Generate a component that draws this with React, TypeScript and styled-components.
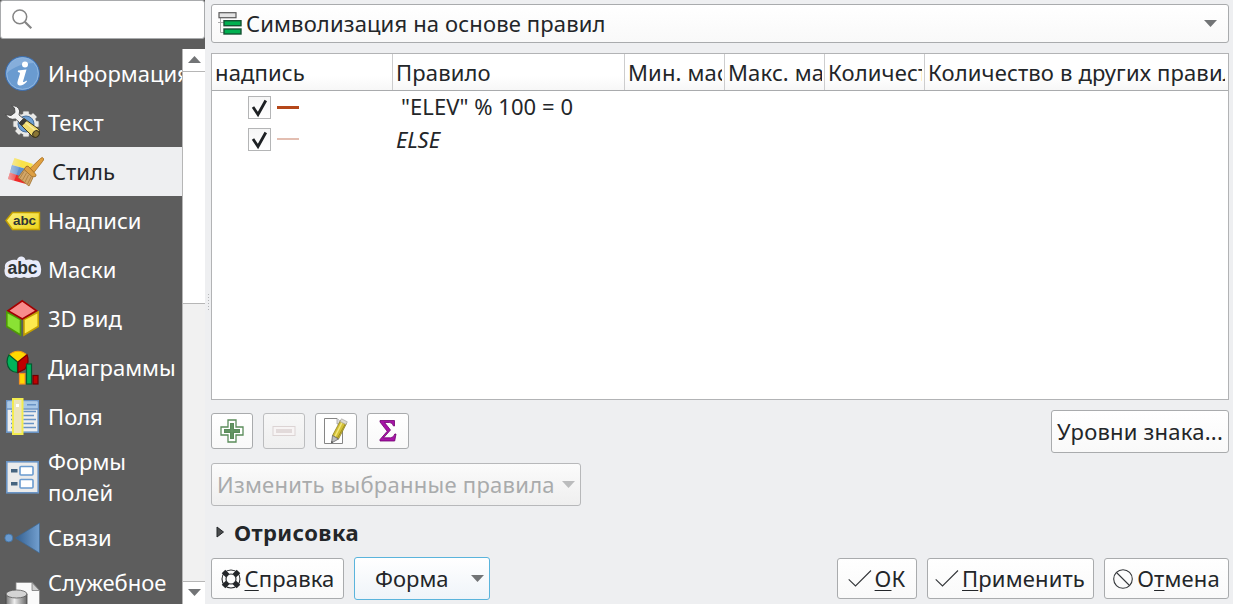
import React from "react";
import styled, { createGlobalStyle, css } from "styled-components";

const Global = createGlobalStyle`
  * { box-sizing: border-box; }
  body {
    margin: 0;
    background: #eeeff1;
    color: #232629;
    font-family: "Noto Sans", sans-serif;
    font-size: 22px;
    line-height: 30px;
    overflow: hidden;
  }
  svg { display: block; flex: none; }
`;

const Window = styled.div`
  display: flex;
  width: 1233px;
  height: 604px;
  overflow: hidden;
`;

/* ---------- sidebar ---------- */

const Sidebar = styled.aside`
  width: 205px;
  flex: none;
  display: flex;
  flex-direction: column;
  background: #5d5d5d;
`;

const Search = styled.div`
  height: 39px;
  flex: none;
  margin-bottom: 10px;
  padding: 8px 0 0 11px;
  background: #fff;
  border: 1px solid #a9abad;
  border-radius: 3px;
`;

const NavArea = styled.div`
  flex: 1;
  min-height: 0;
  display: flex;
`;

const NavList = styled.nav`
  width: 182px;
  overflow: hidden;
`;

const NavItem = styled.div<{ $active?: boolean; $tall?: boolean }>`
  display: flex;
  align-items: center;
  gap: ${(p) => (p.$active ? 8 : 4)}px;
  height: ${(p) => (p.$tall ? 72 : 49)}px;
  padding-left: 4px;
  color: ${(p) => (p.$active ? "#232629" : "#fff")};
  background: ${(p) => (p.$active ? "#eeeff1" : "transparent")};
`;

const NavLabel = styled.span<{ $wrap?: boolean }>`
  padding-bottom: 1px;
  line-height: ${(p) => (p.$wrap ? 31 : 30)}px;
  white-space: ${(p) => (p.$wrap ? "pre-line" : "nowrap")};
`;

const Scrollbar = styled.div`
  width: 23px;
  display: flex;
  flex-direction: column;
  border-left: 1px solid #b6b6b6;
  background: #f1f1f1;
`;

const ScrollButton = styled.div<{ $bottom?: boolean }>`
  height: 23px;
  flex: none;
  display: flex;
  align-items: center;
  justify-content: center;
  padding-bottom: 2px;
  background: #fff;
  ${(p) => (p.$bottom ? "border-top" : "border-bottom")}: 1px solid #b6b6b6;
`;

const Thumb = styled.div`
  height: 232px;
  background: #fff;
  border-bottom: 1px solid #b6b6b6;
`;

const Track = styled.div`
  flex: 1;
`;

const Splitter = styled.div`
  width: 6px;
  flex: none;
  display: flex;
  flex-direction: column;
  align-items: center;
  justify-content: center;
  gap: 2px;
`;

const Dot = styled.i`
  width: 1px;
  height: 1px;
  background: #b4b5b7;
`;

/* ---------- main panel ---------- */

const Main = styled.main`
  width: 1018px;
  padding-top: 4px;
  display: flex;
  flex-direction: column;
  letter-spacing: 0.15px;
`;

const raised = css`
  display: flex;
  align-items: center;
  flex: none;
  border: 1px solid #a9abad;
  border-radius: 3px;
  background: linear-gradient(#ffffff, #f9f9f9);
  white-space: nowrap;
`;

const Caption = styled.span`
  padding-bottom: 2px;
`;

const Combo = styled.div`
  ${raised}
  height: 39px;
  margin-bottom: 10px;
  padding: 0 11px 0 6px;
  justify-content: space-between;
`;

const ComboValue = styled.div`
  display: flex;
  align-items: center;
  gap: 4px;
`;

const Table = styled.div`
  height: 347px;
  flex: none;
  background: #fff;
  border: 1px solid #b2b3b5;
`;

const columns = "181px 232px 100px 100px 100px 1fr";

const HeaderRow = styled.div`
  display: grid;
  grid-template-columns: ${columns};
  height: 37px;
  background: linear-gradient(#ffffff 60%, #f7f7f7);
  border-bottom: 1px solid #a9abad;
`;

const HeaderCell = styled.div`
  min-width: 0;
  padding: 3px 2px 0 3px;
  border-right: 1px solid #cdcdce;
  &:last-child { border-right: 0; padding-right: 3px; }
`;

const HeaderText = styled.div`
  overflow: hidden;
  white-space: nowrap;
`;

const Row = styled.div`
  display: grid;
  grid-template-columns: ${columns};
  height: 32px;
`;

const SymbolCell = styled.div`
  display: flex;
  align-items: center;
  gap: 6px;
  padding-left: 36px;
`;

const CheckBox = styled.div`
  width: 23px;
  height: 23px;
  border: 1px solid #b4b5b6;
  background: linear-gradient(#f6f6f6, #ffffff);
`;

const Line = styled.div<{ $faint?: boolean }>`
  width: 22px;
  height: ${(p) => (p.$faint ? 2 : 3)}px;
  margin-bottom: 0;
  background: ${(p) => (p.$faint ? "#e3beb1" : "#b5471a")};
`;

const RuleCell = styled.div<{ $italic?: boolean }>`
  padding: ${(p) => (p.$italic ? "1px 0 0 3px" : "0 0 0 8px")};
  font-style: ${(p) => (p.$italic ? "italic" : "normal")};
  letter-spacing: ${(p) => (p.$italic ? "-0.1px" : "0.05px")};
  white-space: nowrap;
`;

const ToolRow = styled.div`
  display: flex;
  align-items: center;
  height: 43px;
  margin-top: 10px;
  gap: 10px;
`;

const ToolButton = styled.div<{ $disabled?: boolean }>`
  ${raised}
  width: 42px;
  height: 36px;
  margin-bottom: 1px;
  justify-content: center;
  ${(p) => p.$disabled && "border-color: #bcbdbf; background: linear-gradient(#f7f7f7, #efefef);"}
`;

const LevelsButton = styled.div`
  ${raised}
  width: 178px;
  height: 43px;
  margin-left: auto;
  justify-content: center;
  letter-spacing: 0.22px;
`;

const ChangeButton = styled.div`
  ${raised}
  width: 370px;
  height: 43px;
  margin-top: 10px;
  padding: 0 5px;
  justify-content: space-between;
  letter-spacing: 0.26px;
  color: #a9abac;
  border-color: #b7b8ba;
  background: linear-gradient(#fbfbfb, #efefef);
`;

const GroupTitle = styled.div`
  display: flex;
  align-items: center;
  gap: 9px;
  height: 31px;
  margin-top: 12px;
  padding: 0 0 3px 5px;
  font-weight: 700;
  letter-spacing: 0.4px;
`;

const Footer = styled.div`
  display: flex;
  align-items: center;
  height: 43px;
  margin-top: 8px;
  gap: 10px;
`;

const DialogButton = styled.div<{ $w: number; $push?: boolean }>`
  ${raised}
  width: ${(p) => p.$w}px;
  height: 41px;
  padding-right: 1px;
  justify-content: center;
  gap: 3px;
  ${(p) => p.$push && "margin-left: auto;"}
`;

const StyleButton = styled.div`
  ${raised}
  width: 136px;
  height: 43px;
  padding: 0 5px 0 20px;
  justify-content: space-between;
  letter-spacing: 0;
  border-color: #5ab4dc;
  background: linear-gradient(#ffffff, #eff4f9);
`;

const DialogText = styled.span`
  padding-bottom: 1px;
`;

const Mnemonic = styled.span`
  text-decoration: underline 1px;
  text-underline-offset: 3px;
  text-decoration-skip-ink: none;
`;

/* ---------- icons ---------- */

const Arrow = ({ up, color = "#727476" }: { up?: boolean; color?: string }) => (
  <svg width="13" height="7" viewBox="0 0 13 7">
    <path d={up ? "M0 7L6.5 0L13 7Z" : "M0 0H13L6.5 7Z"} fill={color} />
  </svg>
);

const SearchIcon = () => (
  <svg width="21" height="21" viewBox="0 0 21 21" fill="none" stroke="#858585">
    <circle cx="7.8" cy="7.8" r="6.9" strokeWidth="1.5" />
    <path d="M12.8 12.8L19.3 19.3" strokeWidth="2.2" />
  </svg>
);

const InfoIcon = () => (
  <svg width="40" height="40" viewBox="0 0 40 40">
    <circle cx="18.5" cy="19.5" r="17" fill="#6a9bd0" stroke="#3c6cab" />
    <path d="M3 19a15.500 15.500 0 0 1 27-10C20 9 9 13 3 19Z" fill="#86aedb" />
    <circle cx="18.5" cy="19.5" r="15.800" fill="none" stroke="#8fb5df" strokeWidth="1" />
    <circle cx="21" cy="10.500" r="3" fill="#fff" />
    <path d="M14 16.500L22.500 15.500L19 27.500Q19 29 22.500 26.500L23 27.500Q19 32 15.500 31.500Q12.500 31 13.700 27L16 19.500Q16.300 18 13.800 18Z" fill="#fff" />
  </svg>
);

const ToolsIcon = () => (
  <svg width="40" height="40" viewBox="0 0 40 40">
    <g transform="translate(22 21)">
      {[0, 45, 90, 135].map((a) => (
        <rect key={a} x="-3" y="-12.800" width="6" height="25.600" rx="1" fill="#e9e9e7" stroke="#8b8b8b" strokeWidth=".5" transform={`rotate(${a})`} />
      ))}
      <circle r="10.500" fill="#e9e9e7" />
      <circle r="8" fill="#6e9fd2" stroke="#466f9d" />
    </g>
    <path d="M15 20L20 15.500L34.500 26Q37.500 30 32 34.500L29 34Z" fill="#f0da6c" stroke="#42391d" />
    <path d="M15 20L20 15.500L23 18L18 23Z" fill="#3b3a36" />
    <path d="M21.500 19.500L32 28" stroke="#f8eba0" strokeWidth="1.500" />
    <ellipse cx="32" cy="31" rx="3" ry="3.500" transform="rotate(40 32 31)" fill="#8a7634" stroke="#39331f" />
    <path d="M7.500 3Q14 2 15.700 8L15 12L19.500 15.500L15.500 19.500L11.500 16Q5 17.500 1.500 11.500L7 12.500L11 9.500L10.500 5Z" fill="#f2f2f2" stroke="#444" strokeWidth=".9" />
  </svg>
);

const StyleIcon = () => (
  <svg width="40" height="40" viewBox="0 0 40 40">
    <defs>
      <linearGradient id="fade" x1="0" x2="1">
        <stop offset="0" stopColor="#eeeff1" stopOpacity=".6" />
        <stop offset="1" stopColor="#eeeff1" stopOpacity="0" />
      </linearGradient>
    </defs>
    <path d="M10.500 6L29 12L26 18L8 13Z" fill="#f9e24a" />
    <path d="M8 13L26 18L17 26L6 20.500Z" fill="#5f92cf" />
    <path d="M6 20.500L17 24.500L22 32L4 27Z" fill="#ef2929" />
    <path d="M10.500 6L18 8.500L10 29L4 27Z" fill="url(#fade)" />
    <path d="M25.500 17L36.500 6.500Q38.500 4.500 39.500 6.500Q40 8 38.500 9.500L29.500 21Z" fill="#e0a040" stroke="#a66c1c" strokeWidth=".8" />
    <path d="M22 14.500Q24 13 26 16L31 21.500Q33 23 31.500 24.500L28 25L20 17.500Z" fill="#dd9f43" stroke="#98651c" strokeWidth=".8" />
    <path d="M20 17.500L29 25.500L25 34L14 25.500Z" fill="#d2a668" stroke="#a0702c" strokeWidth=".8" />
    <path d="M20 19.500L16 26M22.500 21L18.500 28M24.500 23L21 30M27 25L23.500 32" stroke="#a77b3e" strokeWidth=".8" />
  </svg>
);

const LabelIcon = () => (
  <svg width="40" height="40" viewBox="0 0 40 40">
    <defs>
      <linearGradient id="tag" x1="0" y1="0" x2="1" y2="1">
        <stop offset="0" stopColor="#fcf17d" />
        <stop offset="1" stopColor="#edd216" />
      </linearGradient>
    </defs>
    <path d="M2 19.500L8.500 11.500H35.500V28.500H8.500Z" fill="url(#tag)" stroke="#c4a000" strokeWidth="1.400" />
    <text x="20.500" y="23.500" textAnchor="middle" fontFamily="Liberation Sans" fontWeight="700" fontSize="13.500" textLength="23" fill="#2e3436">abc</text>
  </svg>
);

const MaskIcon = () => (
  <svg width="40" height="40" viewBox="0 0 40 40">
    <path d="M5 11Q9 9 13 10Q14 6 18 6.500Q21 7 21.500 10Q26 9 29 10.500Q35 9 36 14Q38 18 36.500 24Q34 28 28 27Q24 29 20 27Q16 29 12 27Q6 29.500 2 26Q-.5 22 1 18Q0 13 5 11Z" fill="#e9ecfa" />
    <text x="18.500" y="23.500" textAnchor="middle" fontFamily="Liberation Sans" fontWeight="700" fontSize="17.500" textLength="30" fill="#2e3436">abc</text>
  </svg>
);

const CubeIcon = () => (
  <svg width="40" height="40" viewBox="0 0 40 40" strokeWidth="1.600">
    <path d="M2.800 13L16.500 20.500V36L2.800 27.500Z" fill="#8ae234" stroke="#4e9a06" />
    <path d="M34.200 13L20 20.500V36L34.200 27.500Z" fill="#fce94f" stroke="#c4a000" />
    <path d="M18.300 1.800L32.500 11.800L18.300 20L4 11.800Z" fill="#f88c8c" stroke="#a40000" />
  </svg>
);

const ChartIcon = () => (
  <svg width="40" height="40" viewBox="0 0 40 40" strokeWidth="1.200">
    <path d="M13.700 14L5.500 7A11.500 11.500 0 0 1 22.500 7Z" fill="#ffd800" stroke="#f2a010" />
    <path d="M13.500 14V24.500Q4 24 3 14Q3 10 5 6.800Z" fill="#00b35a" stroke="#00592c" />
    <path d="M14 14L23 6.800Q26 14 21 21L14 24.500Z" fill="#c00000" stroke="#7a0000" />
    <rect x="15.500" y="25.500" width="5.500" height="10.500" fill="#ffd800" stroke="#f7931e" />
    <rect x="22.500" y="16" width="5" height="20" fill="#00b35a" stroke="#005c30" />
    <rect x="29" y="27.500" width="5" height="8.500" fill="#c00000" stroke="#6e0000" />
  </svg>
);

const FieldsIcon = () => (
  <svg width="40" height="40" viewBox="0 0 40 40">
    <rect x="2.800" y="3.800" width="31.400" height="31.400" fill="#eee" stroke="#6a94c5" strokeWidth="1.600" />
    <rect x="3.600" y="4.600" width="29.800" height="7" fill="#a9c9e8" />
    <path d="M3 12H34M23 7.700H32M23 14.500H32M23 18.500H30M23 22.500H32M23 26.500H30M23 30.500H32M7 14.500H9M7 18.500H9M7 22.500H9M7 26.500H9M7 30.500H9" stroke="#6a94c5" strokeWidth="1.500" />
    <rect x="9" y="2" width="9.500" height="35" fill="#ede5ba" stroke="#f3ec4f" strokeWidth="2" />
    <path d="M19.500 14.500H23M19.500 18.500H23M19.500 22.500H23M19.500 26.500H23M19.500 30.500H23" stroke="#6a94c5" strokeWidth="1.500" />
    <rect x="12" y="7" width="3" height="3" fill="#fff" />
  </svg>
);

const FormIcon = () => (
  <svg width="40" height="40" viewBox="0 0 40 40">
    <rect x="2.800" y="4.800" width="31.400" height="31" fill="#ebebeb" stroke="#6a94c5" strokeWidth="1.600" />
    <path d="M7 13.700H13.500M7 26.700H13.500" stroke="#46647f" strokeWidth="3.500" />
    <rect x="16" y="9.500" width="13" height="8.500" rx="1" fill="#fff" stroke="#6a9bd0" strokeWidth="1.600" />
    <rect x="16" y="22.500" width="13" height="8.500" rx="1" fill="#fff" stroke="#6a9bd0" strokeWidth="1.600" />
  </svg>
);

const JoinIcon = () => (
  <svg width="40" height="40" viewBox="0 0 40 40">
    <defs>
      <linearGradient id="join">
        <stop offset="0" stopColor="#335f90" />
        <stop offset="1" stopColor="#729fcf" />
      </linearGradient>
    </defs>
    <circle cx="4.800" cy="20" r="4" fill="#6a9bd0" stroke="#41719f" strokeWidth=".8" />
    <path d="M11.500 20L35.500 5V35Z" fill="url(#join)" stroke="#3c6997" strokeWidth=".7" />
  </svg>
);

const StorageIcon = () => (
  <svg width="40" height="40" viewBox="0 0 40 40">
    <defs>
      <linearGradient id="disk">
        <stop offset="0" stopColor="#777" />
        <stop offset=".4" stopColor="#eee" />
        <stop offset="1" stopColor="#666" />
      </linearGradient>
    </defs>
    <path d="M12 4.500H28L35.500 12.500V38H12Z" fill="#fafafa" stroke="#888" strokeWidth=".8" />
    <path d="M28 4.500V12.500H35.500Z" fill="#ccc" stroke="#777" strokeWidth=".8" />
    <path d="M2 16V34H23V16Z" fill="url(#disk)" stroke="#444" strokeWidth=".8" />
    <ellipse cx="12.500" cy="16" rx="10.500" ry="4" fill="#d4d4d4" stroke="#555" strokeWidth=".8" />
  </svg>
);

const RuleIcon = () => (
  <svg width="24" height="24" viewBox="0 0 24 24">
    <path d="M2.500 6V20.500H6M0 10.500H6" fill="none" stroke="#aaa" strokeWidth="1" />
    <rect x="1" y=".7" width="17" height="5" fill="#e4e4e4" stroke="#5b5b5b" strokeWidth="1.200" />
    <rect x="6" y="8.700" width="17" height="5" fill="#00b050" stroke="#145232" strokeWidth="1.400" />
    <rect x="6" y="17" width="17" height="5" fill="#00b050" stroke="#145232" strokeWidth="1.400" />
  </svg>
);

const CheckMark = () => (
  <svg width="21" height="21" viewBox="0 0 21 21">
    <path d="M4 10L9 17.500L16.800 3.500" fill="none" stroke="#1d2023" strokeWidth="2.800" />
  </svg>
);

const PlusIcon = () => (
  <svg width="24" height="24" viewBox="0 0 24 24">
    <path d="M8 1H16V8H23V16H16V23H8V16H1V8H8Z" fill="#fff" stroke="#5a8c5a" strokeWidth="1.300" />
    <path d="M12 4V20M4 12H20" stroke="#5a8c5a" strokeWidth="4" />
    <path d="M12 5V19M5 12H19" stroke="#6b9c6a" strokeWidth="1" />
  </svg>
);

const MinusIcon = () => (
  <svg width="24" height="24" viewBox="0 0 24 24">
    <rect x="1" y="7.500" width="22" height="9" fill="#f7f4f4" stroke="#dcd4d4" />
    <rect x="4" y="10" width="16" height="4" fill="#e2dada" />
  </svg>
);

const EditIcon = () => (
  <svg width="28" height="28" viewBox="0 0 28 28">
    <path d="M2.500 1.500H15L20.500 7V26.500H2.500Z" fill="#fff" stroke="#858585" />
    <path d="M15 1.500V7H20.500" fill="#ddd" stroke="#999" strokeWidth=".7" />
    <path d="M18.500 3.500L24.500 6.500L16.500 22L10.500 18.500Z" fill="#d5c136" stroke="#8d8022" strokeWidth=".8" />
    <path d="M20.300 5L13 19.500" stroke="#f2e77d" strokeWidth="1.500" />
    <path d="M23.300 7L15.500 21" stroke="#9d8d21" strokeWidth="1" />
    <path d="M19.500 1.800L25.300 4.800L24 7.500L18 4.500Z" fill="#ddd9cf" stroke="#999" strokeWidth=".6" />
    <path d="M10.500 18.500L16.500 22L9.500 26Z" fill="#bdbdbd" stroke="#666" strokeWidth=".8" />
    <path d="M9.500 26L9.600 24L11 24.900Z" fill="#333" />
  </svg>
);

const SigmaIcon = () => (
  <svg width="24" height="26" viewBox="0 0 24 26">
    <path d="M4 2.500H18.500V8H17.500Q16.500 4.500 13.500 4.500H8.500L14.500 12L7.500 19.800H14.500Q17.500 19.800 18.800 16H20L18.700 23H4V21.500L11.200 13.300L4 4Z" fill="#a613a6" stroke="#710071" strokeWidth=".8" />
  </svg>
);

const HelpIcon = () => (
  <svg width="22" height="22" viewBox="0 0 22 22" fill="none" stroke="#232629">
    <circle cx="11" cy="11" r="9" strokeWidth="1.100" />
    <circle cx="11" cy="11" r="5" strokeWidth="1.100" />
    <path d="M3.500 3.500L7.600 7.600M18.500 3.500L14.400 7.600M3.500 18.500L7.600 14.400M18.500 18.500L14.400 14.400" strokeWidth="5" />
  </svg>
);

const OkIcon = () => (
  <svg width="24" height="20" viewBox="0 0 24 20">
    <path d="M.7 10.300L7.500 17L23 1.500" fill="none" stroke="#34373a" strokeWidth="1.100" />
  </svg>
);

const CancelIcon = () => (
  <svg width="22" height="22" viewBox="0 0 22 22" fill="none" stroke="#34373a" strokeWidth="1.100">
    <circle cx="11" cy="11" r="9.300" />
    <path d="M4.500 4.500L17.500 17.500" />
  </svg>
);

/* ---------- data ---------- */

const navItems = [
  { label: "Информация", icon: <InfoIcon /> },
  { label: "Текст", icon: <ToolsIcon /> },
  { label: "Стиль", icon: <StyleIcon />, active: true },
  { label: "Надписи", icon: <LabelIcon /> },
  { label: "Маски", icon: <MaskIcon /> },
  { label: "3D вид", icon: <CubeIcon /> },
  { label: "Диаграммы", icon: <ChartIcon /> },
  { label: "Поля", icon: <FieldsIcon /> },
  { label: "Формы\nполей", icon: <FormIcon />, tall: true },
  { label: "Связи", icon: <JoinIcon /> },
  { label: "Служебное\nхранилище", icon: <StorageIcon />, tall: true },
];

const headers = ["надпись", "Правило", "Мин. масштаб", "Макс. масштаб", "Количество", "Количество в других правилах"];

const rules = [
  { text: "\"ELEV\" % 100 = 0", fallback: false },
  { text: "ELSE", fallback: true },
];

export default function App() {
  return (
    <Window>
      <Global />
      <Sidebar>
        <Search><SearchIcon /></Search>
        <NavArea>
          <NavList>
            {navItems.map((n) => (
              <NavItem key={n.label} $active={n.active} $tall={n.tall}>
                {n.icon}
                <NavLabel $wrap={n.tall}>{n.label}</NavLabel>
              </NavItem>
            ))}
          </NavList>
          <Scrollbar>
            <ScrollButton><Arrow up /></ScrollButton>
            <Thumb />
            <Track />
            <ScrollButton $bottom><Arrow /></ScrollButton>
          </Scrollbar>
        </NavArea>
      </Sidebar>
      <Splitter>
        {[0, 1, 2, 3, 4, 5].map((i) => <Dot key={i} />)}
      </Splitter>
      <Main>
        <Combo>
          <ComboValue><RuleIcon /><Caption>Символизация на основе правил</Caption></ComboValue>
          <Arrow />
        </Combo>
        <Table>
          <HeaderRow>
            {headers.map((h) => (
              <HeaderCell key={h}><HeaderText>{h}</HeaderText></HeaderCell>
            ))}
          </HeaderRow>
          {rules.map((r) => (
            <Row key={r.text}>
              <SymbolCell>
                <CheckBox><CheckMark /></CheckBox>
                <Line $faint={r.fallback} />
              </SymbolCell>
              <RuleCell $italic={r.fallback}>{r.text}</RuleCell>
            </Row>
          ))}
        </Table>
        <ToolRow>
          <ToolButton><PlusIcon /></ToolButton>
          <ToolButton $disabled><MinusIcon /></ToolButton>
          <ToolButton><EditIcon /></ToolButton>
          <ToolButton><SigmaIcon /></ToolButton>
          <LevelsButton><Caption>Уровни знака...</Caption></LevelsButton>
        </ToolRow>
        <ChangeButton><Caption>Изменить выбранные правила</Caption><Arrow color="#bbbcbd" /></ChangeButton>
        <GroupTitle>
          <svg width="9" height="12" viewBox="0 0 9 12">
            <path d="M1 1L7.500 6L1 11Z" fill="#4a4c4e" stroke="#232629" />
          </svg>
          Отрисовка
        </GroupTitle>
        <Footer>
          <DialogButton $w={133}><HelpIcon /><DialogText><Mnemonic>С</Mnemonic>правка</DialogText></DialogButton>
          <StyleButton><Caption>Форма</Caption><Arrow /></StyleButton>
          <DialogButton $w={80} $push><OkIcon /><DialogText><Mnemonic>О</Mnemonic>К</DialogText></DialogButton>
          <DialogButton $w={167}><OkIcon /><DialogText><Mnemonic>П</Mnemonic>рименить</DialogText></DialogButton>
          <DialogButton $w={125}><CancelIcon /><DialogText>О<Mnemonic>т</Mnemonic>мена</DialogText></DialogButton>
        </Footer>
      </Main>
    </Window>
  );
}
